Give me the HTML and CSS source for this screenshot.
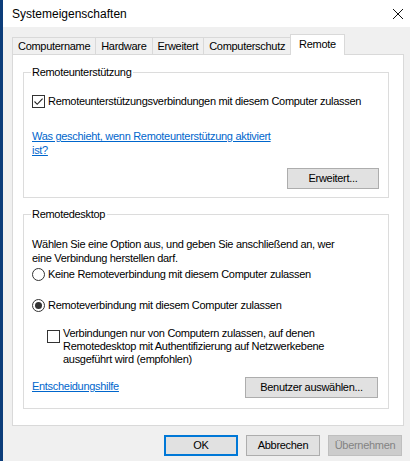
FILE: index.html
```html
<!DOCTYPE html>
<html lang="de">
<head>
<meta charset="utf-8">
<title>Systemeigenschaften</title>
<link rel="stylesheet" href="styles.css">
</head>
<body>
<div class="window">
  <div class="titlebar">
    <span class="title">Systemeigenschaften</span>
    <svg class="close" width="12" height="12" viewBox="0 0 12 12"><path d="M1 1 L11 11 M11 1 L1 11" stroke="#111" stroke-width="1" fill="none"/></svg>
  </div>
  <div class="content">
    <div class="tabs">
      <div class="tab">Computername</div>
      <div class="tab">Hardware</div>
      <div class="tab">Erweitert</div>
      <div class="tab">Computerschutz</div>
      <div class="tab active">Remote</div>
    </div>
    <div class="panel">
      <div class="group g1">
        <div class="group-title">Remoteunterstützung</div>
        <div class="check-row">
          <span class="checkbox"><svg width="11" height="11" viewBox="0 0 11 11"><path d="M1.5 5.5 L4.2 8.3 L9.6 2.6" stroke="#222" stroke-width="1.1" fill="none"/></svg></span>
          <span>Remoteunterstützungsverbindungen mit diesem Computer zulassen</span>
        </div>
        <a class="link help-link" href="#">Was geschieht, wenn Remoteunterstützung aktiviert<br>ist?</a>
        <div class="btn-row">
          <button class="btn btn-adv">Erweitert...</button>
        </div>
      </div>
      <div class="group g2">
        <div class="group-title">Remotedesktop</div>
        <p class="intro">Wählen Sie eine Option aus, und geben Sie anschließend an, wer<br>eine Verbindung herstellen darf.</p>
        <div class="radio-row r1">
          <span class="radio"></span>
          <span>Keine Remoteverbindung mit diesem Computer zulassen</span>
        </div>
        <div class="radio-row r2">
          <span class="radio selected"><span class="dot"></span></span>
          <span>Remoteverbindung mit diesem Computer zulassen</span>
        </div>
        <div class="check-row nla">
          <span class="checkbox"></span>
          <span class="nla-text">Verbindungen nur von Computern zulassen, auf denen<br>Remotedesktop mit Authentifizierung auf Netzwerkebene<br>ausgeführt wird (empfohlen)</span>
        </div>
        <div class="action-row">
          <a class="link" href="#">Entscheidungshilfe</a>
          <button class="btn btn-users">Benutzer auswählen...</button>
        </div>
      </div>
    </div>
    <div class="footer">
      <button class="btn btn-foot btn-default">OK</button>
      <button class="btn btn-foot">Abbrechen</button>
      <button class="btn btn-foot btn-disabled">Übernehmen</button>
    </div>
  </div>
</div>
</body>
</html>
```

FILE: styles.css
```css
* { box-sizing: border-box; }
html, body {
  margin: 0;
  padding: 0;
}
body {
  background: #f0f0f0;
  font-family: "Liberation Sans", Arial, sans-serif;
  font-size: 11px;
  letter-spacing: -0.3px;
  color: #000;
  width: 410px;
  height: 461px;
  overflow: hidden;
}
.window {
  border-left: 3px solid #0c3d7a;
  height: 461px;
  display: flex;
  flex-direction: column;
}
.titlebar {
  flex: none;
  height: 27px;
  background: #fff;
  display: flex;
  align-items: center;
  justify-content: space-between;
  padding: 0 6px 0 9px;
}
.title {
  font-family: "Liberation Sans", Arial, sans-serif;
  font-size: 12px;
  letter-spacing: 0;
  line-height: 16px;
  padding-top: 1px;
}
.close { display: block; }
.content {
  flex: none;
  padding: 0 6px 0 9px;
  display: flex;
  flex-direction: column;
}
.tabs {
  margin-top: 7px;
  height: 20px;
  display: flex;
  align-items: flex-end;
}
.tab {
  height: 17px;
  line-height: 16px;
  padding: 0 5px;
  border: 1px solid #d9d9d9;
  border-bottom: none;
  background: #f0f0f0;
  margin-left: -1px;
  white-space: nowrap;
}
.tab:first-child { margin-left: 0; }
.tab.active {
  height: 21px;
  margin-bottom: -1px;
  background: #fff;
  position: relative;
  z-index: 1;
  padding: 1px 8px 0 8px;
}
.panel {
  border: 1px solid #d9d9d9;
  background: #fff;
  padding: 17px 14px 16px 10px;
  display: flex;
  flex-direction: column;
}
.group {
  border: 1px solid #dcdcdc;
  padding: 0 9px 8px 8px;
  display: flex;
  flex-direction: column;
}
.group-title {
  align-self: flex-start;
  margin: -7px 0 0 -1px;
  padding: 0 2px 0 1px;
  background: #fff;
  line-height: 13px;
}
.check-row {
  display: flex;
  align-items: center;
  line-height: 14px;
  margin-top: 15px;
  white-space: nowrap;
}
.checkbox {
  width: 13px;
  height: 13px;
  border: 1px solid #333;
  background: #fff;
  margin-right: 3px;
  flex: none;
  display: flex;
  align-items: center;
  justify-content: center;
}
.checkbox svg { display: block; }
.link {
  color: #0066cc;
  text-decoration: underline;
  line-height: 14px;
  align-self: flex-start;
}
.help-link { margin-top: 21px; }
.btn-row {
  margin-top: 11px;
  display: flex;
  justify-content: flex-end;
}
.btn {
  font-family: "Liberation Sans", Arial, sans-serif;
  font-size: 11px;
  letter-spacing: -0.3px;
  color: #000;
  background: #e1e1e1;
  border: 1px solid #adadad;
  height: 21px;
  padding: 0;
  margin: 0;
  line-height: 19px;
}
.btn-adv { width: 92px; }
.g2 {
  margin-top: 16px;
  padding-bottom: 10px;
}
.intro {
  margin: 16px 0 0 0;
  line-height: 14px;
  white-space: nowrap;
}
.radio-row {
  display: flex;
  align-items: center;
  line-height: 14px;
  height: 14px;
  white-space: nowrap;
}
.r1 { margin-top: 2px; }
.r2 { margin-top: 17px; }
.radio {
  width: 13px;
  height: 13px;
  border: 1px solid #333;
  border-radius: 50%;
  background: #fff;
  margin-right: 3px;
  flex: none;
  display: flex;
  align-items: center;
  justify-content: center;
}
.radio .dot {
  width: 7px;
  height: 7px;
  border-radius: 50%;
  background: #333;
}
.nla {
  margin-left: 15px;
  align-items: flex-start;
  line-height: 13px;
}
.nla .checkbox { margin-top: 3px; }
.action-row {
  margin-top: 11px;
  display: flex;
  justify-content: space-between;
  align-items: center;
}
.action-row .link { padding-top: 2px; }
.btn-users {
  width: 133px;
  margin-right: 1px;
}
.footer {
  margin-top: 9px;
  display: flex;
  justify-content: flex-end;
  gap: 8px;
  padding-right: 2px;
}
.btn-foot { width: 74px; }
.btn-default {
  border: 2px solid #0078d7;
  line-height: 17px;
}
.btn-disabled {
  background: #cccccc;
  border-color: #bfbfbf;
  color: #838383;
}
```
